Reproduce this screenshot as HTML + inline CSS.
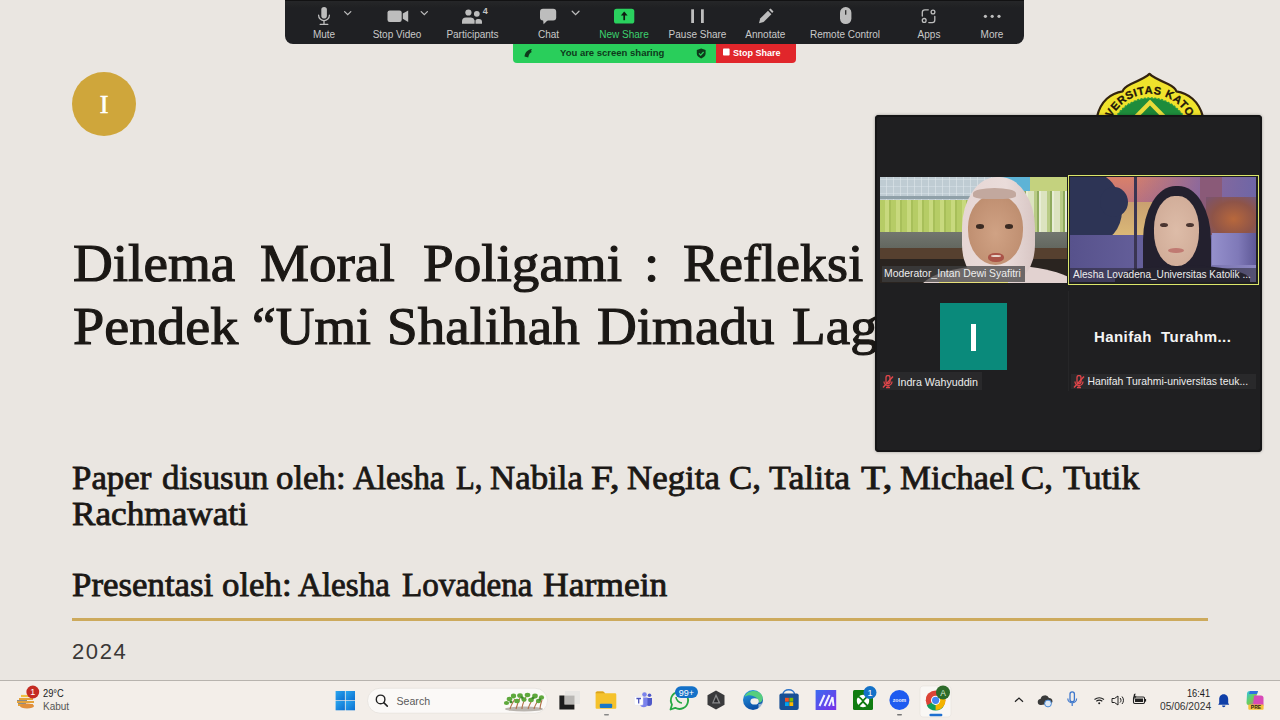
<!DOCTYPE html>
<html><head><meta charset="utf-8">
<style>
*{margin:0;padding:0;box-sizing:border-box}
html,body{width:1280px;height:720px;overflow:hidden}
body{background:#EAE6E1;position:relative;font-family:"Liberation Sans",sans-serif}
.a{position:absolute}
.w{position:absolute;font-family:"Liberation Serif",serif;font-weight:normal;color:#1B1815;white-space:pre;line-height:1;transform-origin:0 0}
.t1{font-size:53px;-webkit-text-stroke:1.15px #1B1815}
.t2{font-size:34.5px;-webkit-text-stroke:0.85px #1B1815}
/* toolbar */
#tb{left:285px;top:0;width:739px;height:43.5px;background:linear-gradient(180deg,#121213 0,#121213 1.5px,#252628 1.5px,#212224 6px,#1F2023 8px);border-radius:0 0 8px 8px}
.lbl{position:absolute;top:28.5px;font-size:10px;color:#C9C9C9;white-space:nowrap;transform:translateX(-50%);line-height:12px}
.car{position:absolute;top:9px;width:6px;height:6px;border-right:1.6px solid #bbb;border-bottom:1.6px solid #bbb;transform:rotate(45deg)}
#ban{left:513px;top:44px;width:203px;height:19px;background:#29CE5B;border-radius:0 0 0 4px}
#stop{left:716px;top:44px;width:80px;height:19px;background:#E1262B;border-radius:0 0 4px 0}
#circ{left:72px;top:72px;width:64px;height:64px;border-radius:50%;background:#CFA63B}
#gl{left:72px;top:618px;width:1136px;height:2.6px;background:#CDAA5C}
#yr{left:72px;top:640px;font-size:22px;color:#3a3836;letter-spacing:1.6px;line-height:24px}
/* video panel */
#vp{left:875px;top:115px;width:387px;height:337px;background:#1F1F21;border-radius:4px;box-shadow:inset 0 0 0 2px #151516,0 0 3px rgba(0,0,0,.35);overflow:hidden}
.vn{position:absolute;font-size:10.4px;color:#EDEDED;white-space:nowrap;line-height:14px}
/* taskbar */
#task{left:0;top:680px;width:1280px;height:40px;background:#F3EEE9;border-top:1px solid #B7B3AE}
</style></head><body>

<!-- slide -->
<div id="circ" class="a"><span class="a" style="left:0;width:64px;top:19.6px;text-align:center;font-family:'Liberation Serif',serif;font-weight:normal;-webkit-text-stroke:0.6px #fff;font-size:26px;line-height:26px;color:#fff">I</span></div>

<span class="w t1" style="left:73px;top:237px;transform:scaleX(1.04)">Dilema</span>
<span class="w t1" style="left:260px;top:237px;transform:scaleX(1.04)">Moral</span>
<span class="w t1" style="left:423px;top:237px;transform:scaleX(1.04)">Poligami</span>
<span class="w t1" style="left:644px;top:237px;transform:scaleX(1.04)">:</span>
<span class="w t1" style="left:683px;top:237px;transform:scaleX(1.02)">Refleksi</span>
<span class="w t1" style="left:73px;top:299.5px;transform:scaleX(1.06)">Pendek</span>
<span class="w t1" style="left:252px;top:299.5px;transform:scaleX(1.01)">“Umi</span>
<span class="w t1" style="left:387px;top:299.5px;transform:scaleX(1.04)">Shalihah</span>
<span class="w t1" style="left:597px;top:299.5px;transform:scaleX(1.04)">Dimadu</span>
<span class="w t1" style="left:792px;top:299.5px;transform:scaleX(1.04)">Lagi”</span>

<span class="w t2" style="left:72px;top:460px;transform:scaleX(1.01)">Paper</span>
<span class="w t2" style="left:162px;top:460px;transform:scaleX(1.01)">disusun</span>
<span class="w t2" style="left:276px;top:460px;transform:scaleX(1.01)">oleh:</span>
<span class="w t2" style="left:353px;top:460px;transform:scaleX(0.955)">Alesha</span>
<span class="w t2" style="left:456px;top:460px;transform:scaleX(0.89)">L,</span>
<span class="w t2" style="left:490px;top:460px;transform:scaleX(1.01)">Nabila</span>
<span class="w t2" style="left:591px;top:460px;transform:scaleX(1.14)">F,</span>
<span class="w t2" style="left:627px;top:460px;transform:scaleX(1.01)">Negita</span>
<span class="w t2" style="left:729px;top:460px;transform:scaleX(1.01)">C,</span>
<span class="w t2" style="left:769px;top:460px;transform:scaleX(1.04)">Talita</span>
<span class="w t2" style="left:861px;top:460px;transform:scaleX(1.16)">T,</span>
<span class="w t2" style="left:900px;top:460px;transform:scaleX(1.01)">Michael</span>
<span class="w t2" style="left:1021px;top:460px;transform:scaleX(1.01)">C,</span>
<span class="w t2" style="left:1063px;top:460px;transform:scaleX(1.04)">Tutik</span>
<span class="w t2" style="left:72px;top:496px;transform:scaleX(1.02)">Rachmawati</span>
<span class="w t2" style="left:72px;top:567px;transform:scaleX(1.01)">Presentasi</span>
<span class="w t2" style="left:222px;top:567px;transform:scaleX(1.01)">oleh:</span>
<span class="w t2" style="left:298px;top:567px;transform:scaleX(0.96)">Alesha</span>
<span class="w t2" style="left:402px;top:567px;transform:scaleX(0.96)">Lovadena</span>
<span class="w t2" style="left:543px;top:567px;transform:scaleX(1.03)">Harmein</span>

<div id="gl" class="a"></div>
<div id="yr" class="a">2024</div>

<!-- toolbar -->
<div id="tb" class="a"></div>
<svg class="a" style="left:0;top:0" width="1280" height="70" viewBox="0 0 1280 70">
 <g fill="#BDBDBD" stroke="none">
  <rect x="321.3" y="7" width="5.6" height="11.6" rx="2.8"/>
  <rect x="387.5" y="10.4" width="14.2" height="11.5" rx="2.2"/>
  <polygon points="402.8,13.6 408.2,10.5 408.2,22 402.8,18.8"/>
  <circle cx="468.4" cy="12.5" r="3.1"/>
  <path d="M462,23.7 v-2.2 a4,4 0 0 1 4,-4 h5 a4,4 0 0 1 3.6,3 v3.2 z"/>
  <circle cx="476.8" cy="13.8" r="2.9"/>
  <path d="M475.5,23.7 v-3.2 a2.5,2.5 0 0 1 2,-1.6 h1.5 a3,3 0 0 1 3,3 v1.8 z"/>
  <rect x="540" y="8.8" width="16.2" height="11.7" rx="3"/>
  <polygon points="543,19.5 543.6,24.2 548.5,19.5"/>
  <rect x="691.2" y="9.3" width="2.8" height="13.7"/>
  <rect x="701" y="9.3" width="2.8" height="13.7"/>
  <polygon points="759,23.2 760.2,18.6 768,10.8 771.4,14.2 763.6,22"/>
  <polygon points="769,9.8 770.6,8.5 773.5,11.4 772.2,13"/>
  <rect x="840" y="7.1" width="11.4" height="17" rx="5.6"/>
  <circle cx="985.4" cy="16.3" r="1.6"/><circle cx="992.2" cy="16.3" r="1.6"/><circle cx="999" cy="16.3" r="1.6"/>
 </g>
 <g fill="none" stroke="#BDBDBD" stroke-width="1.3" stroke-linecap="round">
  <path d="M318.6,15.2 a5.4,5.4 0 0 0 10.8,0"/>
  <path d="M324,20.8 V24.3 M320.2,24.4 H327.8"/>
  <path d="M344.6,11.6 L347.7,14.6 L350.8,11.6"/>
  <path d="M421.2,11.6 L424.3,14.6 L427.4,11.6"/>
  <path d="M572.2,11.3 L575.6,14.6 L579,11.3"/>
  <path d="M922.3,16 V12.4 a2.6,2.6 0 0 1 2.6,-2.6 H928.3"/>
  <path d="M934.8,16.5 V20 a2.6,2.6 0 0 1 -2.6,2.6 H928.8"/>
  <circle cx="933" cy="12" r="1.9"/>
  <circle cx="924.2" cy="20.4" r="1.9"/>
 </g>
 <path d="M845.7,10.6 V14.2" stroke="#2a2a2a" stroke-width="1.3" stroke-linecap="round"/>
 <rect x="614" y="8.8" width="20.3" height="14.8" rx="2.6" fill="#2AD15E"/>
 <path d="M624.2,20.2 V13.5" stroke="#0f1a12" stroke-width="1.7"/>
 <polygon points="620.8,15.4 624.2,11.4 627.6,15.4" fill="#0f1a12"/>
 <text x="482.8" y="13.8" font-family="Liberation Sans" font-size="9" font-weight="bold" fill="#C4C4C4">4</text>
</svg>
<span class="lbl" style="left:324px">Mute</span>
<span class="lbl" style="left:397px">Stop Video</span>
<span class="lbl" style="left:472.5px">Participants</span>
<span class="lbl" style="left:548.5px">Chat</span>
<span class="lbl" style="left:624px;color:#3CD26E">New Share</span>
<span class="lbl" style="left:697.5px">Pause Share</span>
<span class="lbl" style="left:765.3px">Annotate</span>
<span class="lbl" style="left:845px">Remote Control</span>
<span class="lbl" style="left:929px">Apps</span>
<span class="lbl" style="left:992px">More</span>

<div id="ban" class="a"></div>
<div id="stop" class="a"></div>
<svg class="a" style="left:505px;top:40px" width="300" height="28" viewBox="505 40 300 28">
 <path d="M524.5,56.5 C525,52 528,49.5 532,49 C530.8,50.3 531,51.2 531.8,52 C530,52.5 528.8,54.5 528.2,57.5 Z" fill="#0E3A1B"/>
 <path d="M701.2,48.5 L705.6,50 V53.6 C705.6,56 703.6,57.6 701.2,58.5 C698.8,57.6 696.8,56 696.8,53.6 V50 Z" fill="#0E3A1B"/>
 <path d="M699,53.4 L700.7,55.1 L703.6,52" stroke="#2AD15E" stroke-width="1.2" fill="none"/>
 <rect x="723" y="48.6" width="6.6" height="7" rx="0.8" fill="#fff"/>
</svg>
<span class="a" style="left:560px;top:46px;font-size:9.5px;font-weight:bold;color:#0E3A1B;line-height:14px;white-space:nowrap">You are screen sharing</span>
<span class="a" style="left:733px;top:46px;font-size:9px;font-weight:bold;color:#fff;line-height:14px;white-space:nowrap">Stop Share</span>

<!-- university logo -->
<svg class="a" style="left:1088px;top:66px" width="126" height="50" viewBox="1088 66 126 50">
 <defs><clipPath id="lc"><path d="M1097,117 C1100.5,101 1111,93 1122.7,91.3 C1123,89.5 1125,87 1131,84 C1139,80.5 1147,77 1149.5,73.8 C1152,77 1160,80.5 1168,84 C1174,87 1176,89.5 1176.3,91.3 C1188,93 1199,101 1203,117 Z"/></clipPath></defs>
 <path d="M1097,117 C1100.5,101 1111,93 1122.7,91.3 C1123,89.5 1125,87 1131,84 C1139,80.5 1147,77 1149.5,73.8 C1152,77 1160,80.5 1168,84 C1174,87 1176,89.5 1176.3,91.3 C1188,93 1199,101 1203,117 Z" fill="#F0E32C" stroke="#33240F" stroke-width="2.2" stroke-linejoin="round"/>
 <g clip-path="url(#lc)">
  <circle cx="1150" cy="138" r="40" fill="#1E8C3B" stroke="#2a9a44" stroke-width="1.5" stroke-dasharray="2 1.5"/>
  <polygon points="1150,99.5 1124,126 1176,126" fill="#E8DC3A"/>
  <polygon points="1150,105.5 1131,125 1169,125" fill="#1C8436"/>
 </g>
 <path id="arc" d="M1107,137 A43,43 0 0 1 1193,137" fill="none"/>
 <text font-family="Liberation Sans" font-weight="bold" font-size="11" fill="#1f160a" letter-spacing="0.6" stroke="#1f160a" stroke-width="0.3"><textPath href="#arc" startOffset="48%" text-anchor="middle">NIVERSITAS KATOL</textPath></text>
</svg>

<!-- video panel -->
<div id="vp" class="a">
 <!-- tile 1 -->
 <div class="a" style="left:5px;top:62px;width:187px;height:106px;overflow:hidden;background:#2a2420">
  <div class="a" style="left:0;top:0;width:187px;height:23px;background:repeating-linear-gradient(90deg,#BFCCD3 0 6px,#D2DCE1 6px 7px),#C5D2D8"></div>
  <div class="a" style="left:0;top:0;width:187px;height:23px;background:repeating-linear-gradient(0deg,rgba(255,255,255,0) 0 6px,rgba(220,230,236,.45) 6px 7px)"></div>
  <div class="a" style="left:0;top:19px;width:130px;height:3px;background:#8FA0A8"></div>
  <div class="a" style="left:120px;top:0;width:34px;height:16px;background:#5DB3D6"></div>
  <div class="a" style="left:150px;top:0;width:37px;height:23px;background:#C4D27E"></div>
  <div class="a" style="left:0;top:23px;width:125px;height:33px;background:repeating-linear-gradient(90deg,#B6CC66 0 5px,#C8D97E 5px 9px,#A8BF5A 9px 11px)"></div>
  <div class="a" style="left:135px;top:14px;width:52px;height:42px;background:repeating-linear-gradient(90deg,#DCE3C0 0 6px,#B9CB86 6px 9px,#8FAA5E 9px 11px,#E8EDD6 11px 13px)"></div>
  <div class="a" style="left:0;top:55px;width:187px;height:16px;background:linear-gradient(180deg,#72766F,#63675F)"></div>
  <div class="a" style="left:0;top:71px;width:187px;height:11px;background:#56402F"></div>
  <div class="a" style="left:0;top:82px;width:187px;height:24px;background:#2A2420"></div>
  <!-- person 1 -->
  <div class="a" style="left:40px;top:88px;width:160px;height:50px;border-radius:50% 50% 0 0;background:#E2D2D0"></div>
  <div class="a" style="left:82px;top:0px;width:73px;height:106px;border-radius:48% 48% 36% 36%;background:linear-gradient(90deg,#E6D6D4,#EADCDA 60%,#D8C6C4)"></div>
  <div class="a" style="left:88px;top:18px;width:55px;height:70px;border-radius:46% 46% 50% 50%;background:radial-gradient(ellipse at 50% 55%,#D0A284 0%,#C29274 60%,#B68868 100%)"></div>
  <div class="a" style="left:93px;top:11px;width:43px;height:11px;border-radius:50% 50% 30% 30%;background:#C2A89E"></div>
  <div class="a" style="left:96px;top:47px;width:8px;height:4.5px;border-radius:50%;background:#3a2a22"></div>
  <div class="a" style="left:125px;top:47px;width:8px;height:4.5px;border-radius:50%;background:#3a2a22"></div>
  <div class="a" style="left:107.5px;top:75.5px;width:16px;height:9px;border-radius:45%;background:#AA5448"></div>
  <div class="a" style="left:110.5px;top:77.5px;width:10px;height:2.5px;border-radius:40%;background:#E8D6CC"></div>
  <div class="a" style="left:2px;top:89px;width:143px;height:16px;background:rgba(62,62,64,.72)"></div>
  <span class="vn" style="left:4px;top:90px">Moderator_Intan Dewi Syafitri</span>
  <div class="a" style="left:59px;top:104.5px;width:69px;height:2px;background:#E7E07A"></div>
 </div>
 <!-- tile 2 -->
 <div class="a" style="left:192.5px;top:60px;width:191px;height:109.5px;border:1.6px solid #DCE76B;background:#1f1f22"></div>
 <div class="a" style="left:195px;top:62px;width:186px;height:105px;overflow:hidden;background:linear-gradient(180deg,#D9806A 0%,#B87080 30%,#7A6398 55%,#5E5690 100%)">
  <div class="a" style="left:60px;top:0;width:126px;height:60px;background:linear-gradient(90deg,rgba(150,100,150,0) 0%,rgba(125,100,165,.8) 55%,#6E66A6 100%)"></div>
  <div class="a" style="left:35px;top:25px;width:50px;height:38px;background:linear-gradient(180deg,#C9A070,#DDBB78)"></div>
  <div class="a" style="left:130px;top:0;width:22px;height:42px;background:#8A5A78"></div>
  <div class="a" style="left:136px;top:20px;width:50px;height:40px;background:radial-gradient(ellipse at 55% 55%,#B8683C 0%,#8E5448 55%,rgba(110,80,110,.6) 100%)"></div>
  <div class="a" style="left:-10px;top:-6px;width:62px;height:72px;background:#2D3455;border-radius:30% 55% 45% 35%"></div>
  <div class="a" style="left:30px;top:10px;width:28px;height:30px;background:#2D3455;border-radius:50%"></div>
  <div class="a" style="left:0;top:58px;width:186px;height:47px;background:linear-gradient(90deg,#57528C,#6A64A0 55%,#8C87C2)"></div>
  <div class="a" style="left:142px;top:56px;width:44px;height:32px;background:linear-gradient(90deg,#9590CC,#7F79B8 60%,#5E5896)"></div>
  <div class="a" style="left:64px;top:0;width:2.5px;height:92px;background:#3A3552"></div>
  <div class="a" style="left:73px;top:9px;width:68px;height:112px;border-radius:48% 48% 22% 22%;background:#23202E"></div>
  <div class="a" style="left:45px;top:88px;width:135px;height:30px;border-radius:50% 50% 0 0;background:#23202E"></div>
  <div class="a" style="left:84px;top:19px;width:45px;height:70px;border-radius:46% 46% 48% 48%;background:radial-gradient(ellipse at 50% 50%,#DDBCA8 0%,#D2AE9A 70%,#BE9A88 100%)"></div>
  <div class="a" style="left:90px;top:45.5px;width:8px;height:4px;border-radius:50%;background:#4a3530"></div>
  <div class="a" style="left:115.5px;top:45.5px;width:8px;height:4px;border-radius:50%;background:#4a3530"></div>
  <div class="a" style="left:98px;top:70.5px;width:16px;height:5px;border-radius:50%;background:#C07A72"></div>
  <div class="a" style="left:0;top:91px;width:186px;height:14px;background:rgba(40,38,50,.55)"></div>
  <span class="vn" style="left:3px;top:91px;font-size:10.1px">Alesha Lovadena_Universitas Katolik ...</span>
 </div>
 <!-- tile 3 -->
 <div class="a" style="left:65px;top:188px;width:67px;height:67px;background:#0A8A7B"></div>
 <div class="a" style="left:96.4px;top:209px;width:4.8px;height:26.5px;background:#fff"></div>
 <div class="a" style="left:5px;top:257px;width:101.5px;height:17.5px;background:#29292B"></div>
 <svg class="a" style="left:6px;top:260px" width="14" height="14" viewBox="0 0 14 14"><path d="M5,2.5 a2,2 0 0 1 4,0 v4 a2,2 0 0 1 -4,0z M3,6.5 a4,4 0 0 0 8,0 M7,10.5 v2 M5,12.5 h4" fill="none" stroke="#E0464A" stroke-width="1.3"/><path d="M2,12.5 L12,1.5" stroke="#E0464A" stroke-width="1.4"/></svg>
 <span class="vn" style="left:22.5px;top:259.5px;font-size:10.7px">Indra Wahyuddin</span>
 <!-- tile 4 -->
 <div class="a" style="left:193px;top:176px;width:1px;height:100px;background:#262628"></div>
 <span class="a" style="left:219px;top:213px;font-size:15px;font-weight:bold;color:#F4F4F4;letter-spacing:0.42px;white-space:pre;line-height:17px">Hanifah  Turahm...</span>
 <div class="a" style="left:195.7px;top:258.6px;width:185.5px;height:15.5px;background:#29292B"></div>
 <svg class="a" style="left:197px;top:260px" width="14" height="14" viewBox="0 0 14 14"><path d="M5,2.5 a2,2 0 0 1 4,0 v4 a2,2 0 0 1 -4,0z M3,6.5 a4,4 0 0 0 8,0 M7,10.5 v2 M5,12.5 h4" fill="none" stroke="#E0464A" stroke-width="1.3"/><path d="M2,12.5 L12,1.5" stroke="#E0464A" stroke-width="1.4"/></svg>
 <span class="vn" style="left:212.5px;top:260px">Hanifah Turahmi-universitas teuk...</span>
</div>

<!-- taskbar -->
<div id="task" class="a"></div>
<svg class="a" style="left:0;top:680px" width="1280" height="40" viewBox="0 680 1280 40">
 <defs>
  <linearGradient id="wg" x1="0" y1="0" x2="1" y2="1"><stop offset="0" stop-color="#2AA7F0"/><stop offset="1" stop-color="#0B6FD0"/></linearGradient>
  <linearGradient id="mg" x1="0" y1="0" x2="1" y2="1"><stop offset="0" stop-color="#3B6CF0"/><stop offset="1" stop-color="#7B2FE8"/></linearGradient>
  <linearGradient id="eg" x1="0" y1="0" x2="0.3" y2="1"><stop offset="0" stop-color="#2A9FE6"/><stop offset="1" stop-color="#0B4FA6"/></linearGradient>
  <linearGradient id="cg" x1="0" y1="0" x2="1" y2="1"><stop offset="0" stop-color="#2FC2E8"/><stop offset=".5" stop-color="#6AD05A"/><stop offset="1" stop-color="#E04AB0"/></linearGradient>
 </defs>
 <!-- weather -->
 <g>
  <path d="M19,699 h14 M17,702 h17 M18,705 h15" stroke="#E4A23A" stroke-width="2.2"/>
  <path d="M21,696 h10" stroke="#F0C040" stroke-width="2.2"/>
  <path d="M17,700.5 h10 M18,703.5 h8" stroke="#8A8A8A" stroke-width="1"/>
  <ellipse cx="27" cy="706" rx="7" ry="2.4" fill="#E08E3C"/>
  <circle cx="32.8" cy="692" r="6.4" fill="#C42B22"/>
  <text x="32.8" y="695.4" font-family="Liberation Sans" font-size="9" fill="#fff" text-anchor="middle">1</text>
 </g>
 <!-- windows logo -->
 <rect x="335.6" y="691" width="9.3" height="9.3" fill="url(#wg)"/>
 <rect x="345.7" y="691" width="9.3" height="9.3" fill="url(#wg)"/>
 <rect x="335.6" y="701" width="9.3" height="9.3" fill="url(#wg)"/>
 <rect x="345.7" y="701" width="9.3" height="9.3" fill="url(#wg)"/>
 <!-- search box -->
 <rect x="367.5" y="688.2" width="180" height="25" rx="12.5" fill="#FBF9F7" stroke="#E6E2DD" stroke-width=".8"/>
 <circle cx="380.6" cy="699.4" r="4.3" fill="none" stroke="#222" stroke-width="1.4"/>
 <path d="M383.8,702.6 L387.3,706.1" stroke="#222" stroke-width="1.5" stroke-linecap="round"/>
 <!-- bush -->
 <g>
  <ellipse cx="524" cy="709" rx="19" ry="2.6" fill="#B9B4AE"/>
  <path d="M510,709 C511,705 513,702 515,699 M516,709 C517,705 518,702 520,698 M522,709 C522,704 524,701 526,697 M528,709 C529,705 531,702 533,698 M534,709 C535,705 537,702 539,699 M540,709 C540,706 541,703 542,700" stroke="#B07048" stroke-width="1.1" fill="none"/>
  <g fill="#5EA83C">
   <ellipse cx="506.5" cy="703" rx="2.6" ry="2"/><ellipse cx="509.5" cy="699" rx="2.8" ry="2.2"/><ellipse cx="513.5" cy="696" rx="2.6" ry="2.4"/>
   <ellipse cx="517" cy="701" rx="2.8" ry="2.2"/><ellipse cx="520" cy="695.5" rx="2.8" ry="2.3"/><ellipse cx="524" cy="699.5" rx="2.6" ry="2.2"/>
   <ellipse cx="527.5" cy="695" rx="2.8" ry="2.2"/><ellipse cx="531" cy="700" rx="2.8" ry="2.2"/><ellipse cx="535" cy="696" rx="2.8" ry="2.4"/>
   <ellipse cx="538.5" cy="701" rx="2.6" ry="2.2"/><ellipse cx="541.5" cy="697.5" rx="2.6" ry="2.2"/>
  </g>
  <g fill="#3E8A2A">
   <ellipse cx="511" cy="702" rx="1.6" ry="1.3"/><ellipse cx="522" cy="697.5" rx="1.6" ry="1.3"/><ellipse cx="533" cy="698" rx="1.6" ry="1.3"/><ellipse cx="540" cy="699.5" rx="1.4" ry="1.2"/>
  </g>
 </g>
 <!-- task view -->
 <rect x="565" y="691" width="15" height="13" fill="#E8E6E3"/>
 <rect x="564.5" y="695.6" width="10" height="8.5" fill="#B9B7B4"/>
 <path d="M559.4,695.6 h5 v9 h10 v4.8 h-15 z" fill="#1c1c1c"/>
 <!-- folder -->
 <path d="M595.6,693 a1.5,1.5 0 0 1 1.5,-1.5 h6 l2,1.8 h10 a1.2,1.2 0 0 1 1.2,1.2 v13.3 a1,1 0 0 1 -1,1 h-18.7 a1,1 0 0 1 -1,-1z" fill="#F5C22C"/>
 <path d="M595.6,693 a1.5,1.5 0 0 1 1.5,-1.5 h6 l2,1.8 h-9.5z" fill="#D9A21E"/>
 <rect x="599.8" y="703.8" width="12.4" height="4.3" rx="1" fill="#1877C9"/>
 <rect x="604" y="714" width="5" height="1.6" rx=".8" fill="#888"/>
 <!-- teams -->
 <circle cx="644.5" cy="694.5" r="2.3" fill="#7B83EB"/>
 <circle cx="649.5" cy="695.2" r="1.8" fill="#5059C9"/>
 <path d="M646,698 h6 v5 a3,3 0 0 1 -6,0z" fill="#5059C9"/>
 <path d="M640,697.5 h7.5 v6.5 a3.8,3.8 0 0 1 -7.5,0z" fill="#7B83EB"/>
 <rect x="634.4" y="696.5" width="8.6" height="8.6" rx="1" fill="#fff" stroke="#e2e2ee" stroke-width=".5"/>
 <path d="M636.4,698.5 h4.6 M638.7,698.5 v5" stroke="#4B53BC" stroke-width="1.3"/>
 <!-- whatsapp -->
 <path d="M670.5,709.5 L672,704.6 A8.6,8.6 0 1 1 675.2,707.8 Z" fill="none" stroke="#27A845" stroke-width="1.8" stroke-linejoin="round"/>
 <path d="M676,697 c0,3 3,6 6,6" stroke="#27A845" stroke-width="1.6" fill="none"/>
 <rect x="675" y="686.2" width="23" height="11.8" rx="5.9" fill="#1471C8"/>
 <text x="686.5" y="695.6" font-family="Liberation Sans" font-size="9" fill="#fff" text-anchor="middle">99+</text>
 <!-- hex app -->
 <polygon points="716,690.6 724.5,695.3 724.5,704.7 716,709.4 707.5,704.7 707.5,695.3" fill="#3a3a3c"/>
 <polygon points="716,693.8 720.5,703.5 712,703.5" fill="#8a8a8c"/>
 <polygon points="716,697 718.4,702.2 713.8,702.2" fill="#2a2a2c"/>
 <!-- edge -->
 <circle cx="753" cy="700" r="10" fill="url(#eg)"/>
 <path d="M744.5,697 C746.5,690.5 757,688.5 761.5,694.5 C763.5,697.5 763,701.5 759.5,703 C759,697.5 750,692.5 744.5,697 Z" fill="#56CE7E"/>
 <ellipse cx="754.6" cy="701.4" rx="4.2" ry="3.1" fill="#F2EEEA"/>
 <path d="M758.5,704 C760.5,704 762.5,703.5 763.2,702 C762.8,705.5 761,708 758.5,709 Z" fill="#F2EEEA" opacity=".6"/>
 <!-- store -->
 <path d="M783,694 a4,3 0 0 1 11.5,0" stroke="#2A72C8" stroke-width="1.4" fill="none"/>
 <rect x="779.4" y="693.4" width="19.3" height="16.6" rx="2" fill="#174F96"/>
 <rect x="785" y="697.8" width="3.8" height="3.8" fill="#F25022"/><rect x="789.4" y="697.8" width="3.8" height="3.8" fill="#7FBA00"/>
 <rect x="785" y="702.2" width="3.8" height="3.8" fill="#00A4EF"/><rect x="789.4" y="702.2" width="3.8" height="3.8" fill="#FFB900"/>
 <!-- M app -->
 <rect x="815.6" y="690" width="20.6" height="20" fill="url(#mg)"/>
 <path d="M819.5,706 l5,-11 M824.5,706 l5,-11 M829,706 l3.5,-9 l1,9" stroke="#F2F2FF" stroke-width="2" fill="none"/>
 <!-- xbox -->
 <rect x="853" y="690" width="20" height="20" rx="1.5" fill="#107C10"/>
 <circle cx="863" cy="701" r="6.2" fill="#fff"/>
 <path d="M857.5,696 c3,2 5,4 5.5,5 c0.5,-1 2.5,-3 5.5,-5 M857.5,707 c2,-2 4,-4 5.5,-5.5 c1.5,1.5 3.5,3.5 5.5,5.5" stroke="#107C10" stroke-width="1.8" fill="none"/>
 <circle cx="870" cy="692.5" r="6.5" fill="#1471C8"/>
 <text x="870" y="696" font-family="Liberation Sans" font-size="9" fill="#fff" text-anchor="middle">1</text>
 <!-- zoom -->
 <circle cx="899.4" cy="700" r="10" fill="#1E5BF0"/>
 <text x="899.4" y="702" font-family="Liberation Sans" font-size="5.2" font-weight="bold" fill="#E8EEFF" text-anchor="middle">zoom</text>
 <rect x="897" y="714" width="5" height="1.6" rx=".8" fill="#777"/>
 <!-- chrome -->
 <rect x="920" y="686" width="31" height="31" rx="3" fill="#F9F7F4" stroke="#E5E1DC" stroke-width=".6"/>
 <circle cx="935.6" cy="700.3" r="9.8" fill="#DB4437"/>
 <path d="M935.6,700.3 L944.1,705.2 A9.8,9.8 0 0 1 926.8,705.5 Z" fill="#0F9D58"/>
 <path d="M935.6,700.3 L944.1,695.4 A9.8,9.8 0 0 1 935.6,710.1 Z" fill="#F4B400"/>
 <path d="M935.6,700.3 L926.1,702 A9.8,9.8 0 0 1 928,694 Z" fill="#DB4437"/>
 <circle cx="935.6" cy="700.3" r="4.6" fill="#fff"/>
 <circle cx="935.6" cy="700.3" r="3.6" fill="#4285F4"/>
 <circle cx="943" cy="692.5" r="7" fill="#2E6B2A"/>
 <text x="943" y="695.8" font-family="Liberation Sans" font-size="8.5" fill="#DDEBD8" text-anchor="middle">A</text>
 <rect x="929.4" y="713.8" width="13" height="2.5" rx="1.2" fill="#1E6FD0"/>
 <!-- tray -->
 <path d="M1015,701.8 L1019,698 L1023,701.8" stroke="#222" stroke-width="1.2" fill="none"/>
 <path d="M1041,705 a3,3 0 0 1 -0.5,-6 a4.5,4.5 0 0 1 8.5,-1 a3.2,3.2 0 0 1 2.5,5.5z" fill="#3a3a3a"/>
 <circle cx="1048" cy="703.5" r="3.4" fill="#DDE8F5" stroke="#4A8BD8" stroke-width="1"/>
 <path d="M1070,694 a2.2,2.2 0 0 1 4.4,0 v5.5 a2.2,2.2 0 0 1 -4.4,0z" fill="none" stroke="#3F78CC" stroke-width="1.3"/>
 <path d="M1067.8,698.5 a4.4,4.4 0 0 0 8.8,0 M1072.2,703 v3" stroke="#3F78CC" stroke-width="1.2" fill="none"/>
 <path d="M1094.5,699.5 a8,8 0 0 1 9.5,0 M1096.3,701.3 a5,5 0 0 1 6,0" stroke="#222" stroke-width="1.1" fill="none"/>
 <circle cx="1099.2" cy="703.2" r="1" fill="#222"/>
 <path d="M1112,698.5 h2.5 l3.5,-2.5 v9 l-3.5,-2.5 h-2.5z" fill="none" stroke="#222" stroke-width="1"/>
 <path d="M1120,698 a3,3 0 0 1 0,4.5 M1122,696.5 a5.5,5.5 0 0 1 0,7.5" stroke="#222" stroke-width="1" fill="none"/>
 <rect x="1133.5" y="697" width="11" height="6.5" rx="1.2" fill="none" stroke="#222" stroke-width="1.1"/>
 <rect x="1135" y="698.5" width="8" height="3.5" fill="#222"/>
 <rect x="1144.8" y="699" width="1.3" height="2.6" fill="#222"/>
 <path d="M1134,694 l1.6,-0.6 l-0.6,3 l1.6,-0.6 l-2.4,4.2 l0.5,-2.8 l-1.5,0.5z" fill="#222"/>
 <!-- bell -->
 <path d="M1223.7,694.2 c-3,0 -4.5,2.5 -4.5,5 v3.8 l-1,1.8 h11 l-1,-1.8 v-3.8 c0,-2.5 -1.5,-5 -4.5,-5z" fill="#0F3FA8"/>
 <path d="M1222,705.5 a1.7,1.7 0 0 0 3.4,0z" fill="#0F3FA8"/>
 <!-- copilot -->
 <path d="M1247,694 a3,3 0 0 1 3,-3 h8 l-4.5,14 h-5 a2,2 0 0 1 -2,-2z" fill="url(#cg)"/>
 <path d="M1254,695.5 h7 a2.5,2.5 0 0 1 2.5,2.5 v7 a2,2 0 0 1 -2,2 h-8.5z" fill="#D84AB8"/>
 <path d="M1250,691 h8 l-1,3 h-8z" fill="#2F6FE0"/>
 <rect x="1248.3" y="704.4" width="15.3" height="5.4" rx="1" fill="#F6C238"/>
 <text x="1256" y="709" font-family="Liberation Sans" font-size="5" font-weight="bold" fill="#222" text-anchor="middle">PRE</text>
</svg>
<span class="a" style="left:43px;top:687.5px;font-size:10px;color:#1a1a1a;line-height:12px;transform:scaleX(.93);transform-origin:0 0">29°C</span>
<span class="a" style="left:43px;top:701px;font-size:10px;color:#555;line-height:12px">Kabut</span>
<span class="a" style="left:396.5px;top:693.5px;font-size:10.6px;color:#5a5a5a;line-height:14px">Search</span>
<span class="a" style="left:1187px;top:687.5px;font-size:10px;color:#1a1a1a;line-height:12px;transform:scaleX(.92);transform-origin:0 0">16:41</span>
<span class="a" style="left:1159.5px;top:701px;font-size:10px;color:#333;line-height:12px;transform:scaleX(1.02);transform-origin:0 0">05/06/2024</span>
</body></html>
